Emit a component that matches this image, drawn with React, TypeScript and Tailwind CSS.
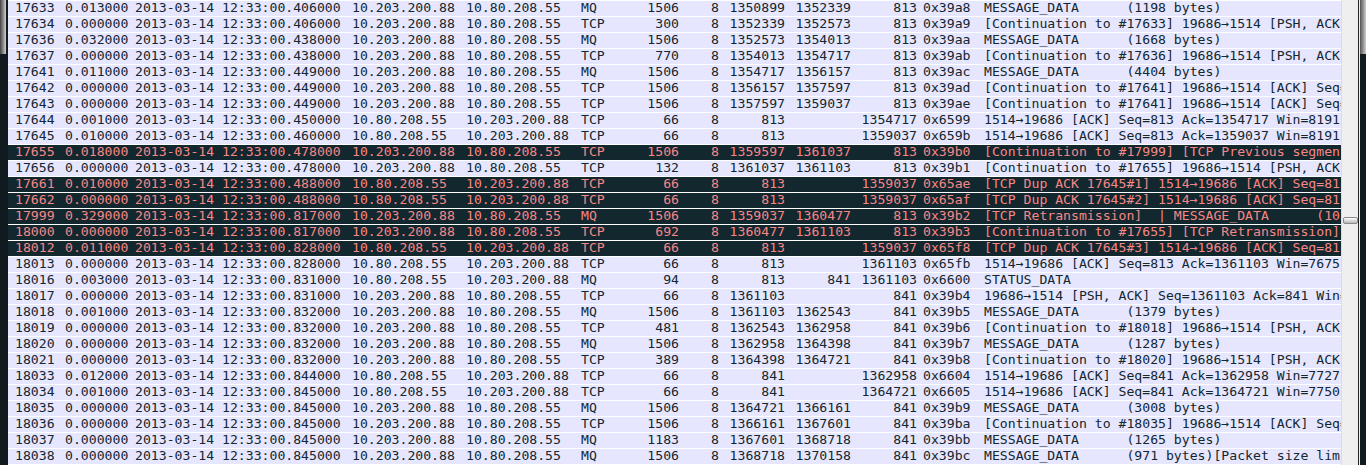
type Row = {
  no: string; delta: string; time: string; src: string; dst: string; proto: string; len: string;
  seq: string; next: string; ack: string; id: string; info: string; bad?: boolean;
};

const A = "10.203.200.88";
const B = "10.80.208.55";

const mk = (no: string, delta: string, time: string, up: boolean, proto: string, len: string, seq: string, next: string, ack: string, id: string, info: string, bad = false): Row => ({
  no, delta, time, src: up ? A : B, dst: up ? B : A, proto, len, seq, next, ack, id, info, bad,
});

const rows: Row[] = [
  mk("17633", "0.013000", "12:33:00.406000", true, "MQ", "1506", "1350899", "1352339", "813", "0x39a8", "MESSAGE_DATA      (1198 bytes)"),
  mk("17634", "0.000000", "12:33:00.406000", true, "TCP", "300", "1352339", "1352573", "813", "0x39a9", "[Continuation to #17633] 19686→1514 [PSH, ACK] Seq=1352339"),
  mk("17636", "0.032000", "12:33:00.438000", true, "MQ", "1506", "1352573", "1354013", "813", "0x39aa", "MESSAGE_DATA      (1668 bytes)"),
  mk("17637", "0.000000", "12:33:00.438000", true, "TCP", "770", "1354013", "1354717", "813", "0x39ab", "[Continuation to #17636] 19686→1514 [PSH, ACK] Seq=1354013"),
  mk("17641", "0.011000", "12:33:00.449000", true, "MQ", "1506", "1354717", "1356157", "813", "0x39ac", "MESSAGE_DATA      (4404 bytes)"),
  mk("17642", "0.000000", "12:33:00.449000", true, "TCP", "1506", "1356157", "1357597", "813", "0x39ad", "[Continuation to #17641] 19686→1514 [ACK] Seq=1356157"),
  mk("17643", "0.000000", "12:33:00.449000", true, "TCP", "1506", "1357597", "1359037", "813", "0x39ae", "[Continuation to #17641] 19686→1514 [ACK] Seq=1357597"),
  mk("17644", "0.001000", "12:33:00.450000", false, "TCP", "66", "813", "", "1354717", "0x6599", "1514→19686 [ACK] Seq=813 Ack=1354717 Win=8191 Len=0"),
  mk("17645", "0.010000", "12:33:00.460000", false, "TCP", "66", "813", "", "1359037", "0x659b", "1514→19686 [ACK] Seq=813 Ack=1359037 Win=8191 Len=0"),
  mk("17655", "0.018000", "12:33:00.478000", true, "TCP", "1506", "1359597", "1361037", "813", "0x39b0", "[Continuation to #17999] [TCP Previous segment not captured]", true),
  mk("17656", "0.000000", "12:33:00.478000", true, "TCP", "132", "1361037", "1361103", "813", "0x39b1", "[Continuation to #17655] 19686→1514 [PSH, ACK] Seq=1361037"),
  mk("17661", "0.010000", "12:33:00.488000", false, "TCP", "66", "813", "", "1359037", "0x65ae", "[TCP Dup ACK 17645#1] 1514→19686 [ACK] Seq=813 Ack=1359037", true),
  mk("17662", "0.000000", "12:33:00.488000", false, "TCP", "66", "813", "", "1359037", "0x65af", "[TCP Dup ACK 17645#2] 1514→19686 [ACK] Seq=813 Ack=1359037", true),
  mk("17999", "0.329000", "12:33:00.817000", true, "MQ", "1506", "1359037", "1360477", "813", "0x39b2", "[TCP Retransmission]  | MESSAGE_DATA      (1032 bytes)", true),
  mk("18000", "0.000000", "12:33:00.817000", true, "TCP", "692", "1360477", "1361103", "813", "0x39b3", "[Continuation to #17655] [TCP Retransmission] 19686→1514", true),
  mk("18012", "0.011000", "12:33:00.828000", false, "TCP", "66", "813", "", "1359037", "0x65f8", "[TCP Dup ACK 17645#3] 1514→19686 [ACK] Seq=813 Ack=1359037", true),
  mk("18013", "0.000000", "12:33:00.828000", false, "TCP", "66", "813", "", "1361103", "0x65fb", "1514→19686 [ACK] Seq=813 Ack=1361103 Win=7675 Len=0"),
  mk("18016", "0.003000", "12:33:00.831000", false, "MQ", "94", "813", "841", "1361103", "0x6600", "STATUS_DATA"),
  mk("18017", "0.000000", "12:33:00.831000", true, "TCP", "66", "1361103", "", "841", "0x39b4", "19686→1514 [PSH, ACK] Seq=1361103 Ack=841 Win=65535 Len=0"),
  mk("18018", "0.001000", "12:33:00.832000", true, "MQ", "1506", "1361103", "1362543", "841", "0x39b5", "MESSAGE_DATA      (1379 bytes)"),
  mk("18019", "0.000000", "12:33:00.832000", true, "TCP", "481", "1362543", "1362958", "841", "0x39b6", "[Continuation to #18018] 19686→1514 [PSH, ACK] Seq=1362543"),
  mk("18020", "0.000000", "12:33:00.832000", true, "MQ", "1506", "1362958", "1364398", "841", "0x39b7", "MESSAGE_DATA      (1287 bytes)"),
  mk("18021", "0.000000", "12:33:00.832000", true, "TCP", "389", "1364398", "1364721", "841", "0x39b8", "[Continuation to #18020] 19686→1514 [PSH, ACK] Seq=1364398"),
  mk("18033", "0.012000", "12:33:00.844000", false, "TCP", "66", "841", "", "1362958", "0x6604", "1514→19686 [ACK] Seq=841 Ack=1362958 Win=7727 Len=0"),
  mk("18034", "0.001000", "12:33:00.845000", false, "TCP", "66", "841", "", "1364721", "0x6605", "1514→19686 [ACK] Seq=841 Ack=1364721 Win=7750 Len=0"),
  mk("18035", "0.000000", "12:33:00.845000", true, "MQ", "1506", "1364721", "1366161", "841", "0x39b9", "MESSAGE_DATA      (3008 bytes)"),
  mk("18036", "0.000000", "12:33:00.845000", true, "TCP", "1506", "1366161", "1367601", "841", "0x39ba", "[Continuation to #18035] 19686→1514 [ACK] Seq=1366161"),
  mk("18037", "0.000000", "12:33:00.845000", true, "MQ", "1183", "1367601", "1368718", "841", "0x39bb", "MESSAGE_DATA      (1265 bytes)"),
  mk("18038", "0.000000", "12:33:00.845000", true, "MQ", "1506", "1368718", "1370158", "841", "0x39bc", "MESSAGE_DATA      (971 bytes)[Packet size limited during capture]"),
];

function PacketRow({ row }: { row: Row }) {
  return (
    <div className={`flex h-[15px] mb-px items-center pb-[2px] whitespace-pre overflow-hidden ${row.bad ? "bg-[#12272e] text-[#f78787]" : "bg-[#e7e6ff] text-[#12272e]"}`}>
      <span className="w-[52px] shrink-0 pl-[7px]">{row.no}</span>
      <span className="w-[70px] shrink-0 pl-[5px]">{row.delta}</span>
      <span className="w-[87px] shrink-0 pl-[5px]">2013-03-14</span>
      <span className="w-[130px] shrink-0 pl-[5px]">{row.time}</span>
      <span className="w-[114px] shrink-0 pl-[5px]">{row.src}</span>
      <span className="w-[115px] shrink-0 pl-[5px]">{row.dst}</span>
      <span className="w-[50px] shrink-0 pl-[5px]">{row.proto}</span>
      <span className="w-[53px] shrink-0 text-right">{row.len}</span>
      <span className="w-[40px] shrink-0 text-right">8</span>
      <span className="w-[66px] shrink-0 text-right">{row.seq}</span>
      <span className="w-[66px] shrink-0 text-right">{row.next}</span>
      <span className="w-[66px] shrink-0 text-right">{row.ack}</span>
      <span className="w-[65px] shrink-0 pl-[6px]">{row.id}</span>
      <span className="min-w-0 flex-1 overflow-hidden pl-[2px]">{row.info}</span>
    </div>
  );
}

export default function App() {
  return (
    <div className="flex h-[465px] w-[1366px] overflow-hidden bg-white font-['DejaVu_Sans_Mono',monospace] text-[13.15px] leading-[15px]">
      <div className="flex w-[8px] shrink-0 flex-col bg-[#111a1f] pr-[2px]">
        <div className="h-[54px] bg-gradient-to-r from-[#444444] to-[#d0d0d0]" />
      </div>
      <div className="min-w-0 flex-1 pt-px">
        {rows.map((r) => (
          <PacketRow key={r.no} row={r} />
        ))}
      </div>
      <div className="relative w-[17px] shrink-0 border-l border-[#dddddd] bg-[#efefef]">
        <div className="absolute left-px top-[217px] h-[7px] w-[15px] rounded-[2px] border border-[#8a8a8a] bg-gradient-to-b from-white to-[#b8b8b8]" />
      </div>
      <div className="w-px shrink-0 bg-[#222222]" />
      <div className="w-px shrink-0 bg-[#eeeeee]" />
      <div className="flex w-[6px] shrink-0 flex-col bg-[#111a1f]">
        <div className="h-[54px] bg-gradient-to-r from-[#555555] to-[#d0d0d0]" />
      </div>
    </div>
  );
}
